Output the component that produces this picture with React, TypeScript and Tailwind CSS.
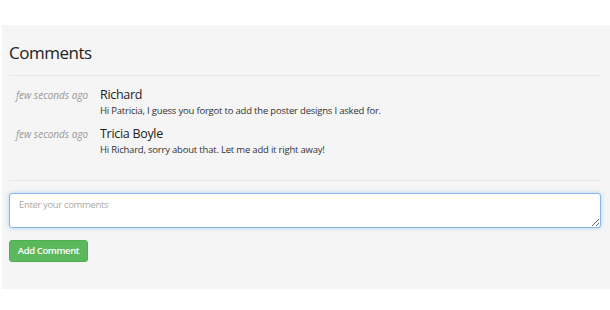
import React from 'react';

interface Comment {
  author: string;
  time: string;
  text: string;
}

const comments: Comment[] = [
  {
    author: 'Richard',
    time: 'few seconds ago',
    text: 'Hi Patricia, I guess you forgot to add the poster designs I asked for.',
  },
  {
    author: 'Tricia Boyle',
    time: 'few seconds ago',
    text: 'Hi Richard, sorry about that. Let me add it right away!',
  },
];

const App: React.FC = () => {
  return (
    <div className="w-[610px] h-[310px] bg-white pt-[25px] pl-[2px] font-['Open_Sans',sans-serif]">
      <div className="h-[264px] bg-[#f5f5f5] pl-[7px] pr-[9px] pt-[15px]">
        <h2 className="text-[17px] leading-[26px] tracking-[-0.5px] text-[#222]">Comments</h2>
        <div className="mt-[9px] border-t border-[#e8e8e8]" />

        <div className="pt-[11px] pb-[23px] flex flex-col gap-[8px]">
          {comments.map((c, i) => (
            <div key={i} className="flex">
              <div className="w-[91px] pl-[7px] text-[10px] italic text-[#999] leading-[16px]">
                {c.time}
              </div>
              <div>
                <div className="text-[12.5px] leading-[16px] tracking-[-0.3px] text-[#222]">{c.author}</div>
                <div className="mt-[1px] text-[9.5px] leading-[14px] tracking-[-0.2px] text-[#333]">{c.text}</div>
              </div>
            </div>
          ))}
        </div>

        <div className="border-t border-[#e8e8e8]" />

        <textarea
          className="mt-[12px] block w-full h-[35px] bg-white border border-[#85b7e8] rounded-[3px] shadow-[0_0_4px_rgba(102,175,233,0.5)] px-[9px] pt-[4px] text-[9.5px] leading-[14px] tracking-[-0.35px] text-[#333] placeholder:text-[#aaa] outline-none resize-y"
          placeholder="Enter your comments"
        />

        <button className="mt-[12px] block w-[79px] h-[22px] bg-[#5cb85c] border border-[#4cae4c] rounded-[3px] text-white text-[9.5px] tracking-[-0.4px] font-semibold">
          Add Comment
        </button>
      </div>
    </div>
  );
};

export default App;
